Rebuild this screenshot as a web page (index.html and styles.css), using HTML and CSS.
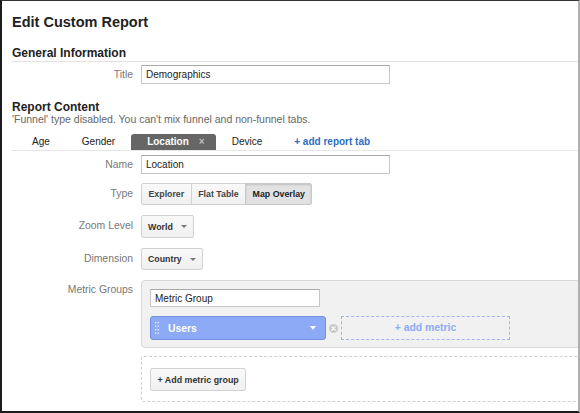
FILE: index.html
```html
<!DOCTYPE html>
<html>
<head>
<meta charset="utf-8">
<title>Edit Custom Report</title>
<link rel="stylesheet" href="styles.css">
</head>
<body>
<div class="frame">
  <h1 class="page-title">Edit Custom Report</h1>

  <h2 class="section general">General Information</h2>
  <div class="row row-title">
    <label class="lbl lh19">Title</label>
    <input class="txt wide" type="text" value="Demographics">
  </div>

  <h2 class="section content">Report Content</h2>
  <p class="note">'Funnel' type disabled. You can't mix funnel and non-funnel tabs.</p>

  <div class="tabs">
    <span class="tab">Age</span>
    <span class="tab">Gender</span>
    <span class="tab active">Location<span class="x">×</span></span>
    <span class="tab">Device</span>
    <a class="tab add">+ add report tab</a>
  </div>

  <div class="row row-name">
    <label class="lbl lh19">Name</label>
    <input class="txt wide" type="text" value="Location">
  </div>

  <div class="row row-type">
    <label class="lbl lh22">Type</label>
    <div class="seg">
      <button class="btn">Explorer</button>
      <button class="btn">Flat Table</button>
      <button class="btn on">Map Overlay</button>
    </div>
  </div>

  <div class="row row-zoom">
    <label class="lbl lh22">Zoom Level</label>
    <button class="sel h23">World<span class="caret"></span></button>
  </div>

  <div class="row row-dim">
    <label class="lbl lh22">Dimension</label>
    <button class="sel h22">Country<span class="caret"></span></button>
  </div>

  <div class="row row-metric">
    <label class="lbl lh20">Metric Groups</label>
    <div class="panel">
      <input class="txt group-name" type="text" value="Metric Group">
      <div class="metric-row">
        <div class="chip">
          <svg class="grip" width="4" height="12" viewBox="0 0 4 12">
            <g fill="#eef3ff">
              <rect x="0" y="0" width="1.3" height="1.3"/><rect x="2.6" y="0" width="1.3" height="1.3"/>
              <rect x="0" y="3.5" width="1.3" height="1.3"/><rect x="2.6" y="3.5" width="1.3" height="1.3"/>
              <rect x="0" y="7" width="1.3" height="1.3"/><rect x="2.6" y="7" width="1.3" height="1.3"/>
              <rect x="0" y="10.5" width="1.3" height="1.3"/><rect x="2.6" y="10.5" width="1.3" height="1.3"/>
            </g>
          </svg>
          <span class="chip-text">Users</span>
          <span class="chip-caret"></span>
        </div>
        <svg class="remove" width="9" height="9" viewBox="0 0 9 9">
          <circle cx="4.5" cy="4.5" r="4.5" fill="#c9c9c9"/>
          <path d="M2.8 2.8 L6.2 6.2 M6.2 2.8 L2.8 6.2" stroke="#fff" stroke-width="1.2" stroke-linecap="round"/>
        </svg>
        <div class="add-metric">+ add metric</div>
      </div>
    </div>
  </div>

  <div class="add-group">
    <button class="btn plain">+ Add metric group</button>
  </div>
</div>
</body>
</html>
```

FILE: styles.css
```css
html, body {
  margin: 0;
  padding: 0;
  background: #fff;
}

.frame {
  width: 580px;
  height: 413px;
  box-sizing: border-box;
  border-top: 1px solid #333;
  border-left: 2px solid #1c1c1c;
  border-bottom: 2px solid #1c1c1c;
  border-right: 2px solid #b0b0b0;
  padding: 12px 0 0 10px;
  overflow: hidden;
  font-family: "Liberation Sans", Arial, sans-serif;
  color: #222;
  background: #fff;
}

.page-title {
  margin: 0;
  font-size: 14.5px;
  line-height: 18px;
  font-weight: bold;
  color: #222;
}

.section {
  margin: 0;
  font-size: 12px;
  font-weight: bold;
  color: #222;
}

.section.general {
  margin-top: 15px;
  line-height: 15px;
  border-bottom: 1px solid #e3e3e3;
}

.section.content {
  margin-top: 16px;
  line-height: 14px;
}

.note {
  margin: -1px 0 0;
  font-size: 10.5px;
  line-height: 12px;
  color: #666;
}

.tabs {
  display: flex;
  margin-top: 9px;
  padding-left: 4px;
  border-bottom: 1px solid #e6e6e6;
  height: 16px;
}

.tab {
  padding: 0 16px;
  font-size: 10px;
  line-height: 16px;
  color: #222;
  white-space: nowrap;
}

.tab.active {
  background: #666;
  color: #fff;
  font-weight: bold;
  border-radius: 3px 3px 0 0;
  padding: 0 11px 0 16px;
}

.tab .x {
  margin-left: 10px;
  color: #bdbdbd;
  font-weight: bold;
}

.tab.add {
  color: #2d6ec4;
  font-weight: bold;
}

.row {
  display: flex;
  align-items: flex-start;
}

.row-title { margin-top: 3px; }
.row-name { margin-top: 4px; }
.row-type { margin-top: 9px; }
.row-zoom { margin-top: 10px; }
.row-dim { margin-top: 10px; }
.row-metric { margin-top: 10px; }

.lbl {
  flex: none;
  width: 121px;
  margin-right: 8px;
  text-align: right;
  font-size: 10.4px;
  color: #777;
}

.lh19 { line-height: 19px; }
.lh20 { line-height: 20px; }
.lh22 { line-height: 22px; }

.txt {
  box-sizing: border-box;
  height: 19px;
  margin: 0;
  padding: 0 4px;
  border: 1px solid #c6c6c6;
  border-top-color: #a9a9a9;
  border-radius: 0;
  font-family: "Liberation Sans", Arial, sans-serif;
  font-size: 10px;
  color: #222;
  background: #fff;
  outline: none;
}

.txt.wide { width: 249px; }

.seg {
  display: flex;
}

.btn {
  box-sizing: border-box;
  height: 22px;
  margin: 0;
  padding: 0 6.5px;
  border: 1px solid #d2d2d2;
  background: linear-gradient(#f9f9f9, #f0f0f0);
  font-family: "Liberation Sans", Arial, sans-serif;
  font-size: 8.8px;
  font-weight: bold;
  color: #444;
  white-space: nowrap;
}

.seg .btn + .btn { margin-left: -1px; }
.seg .btn:first-child { border-radius: 2px 0 0 2px; }
.seg .btn:last-child { border-radius: 0 2px 2px 0; }

.btn.on {
  background: #e2e2e2;
  border-color: #c8c8c8;
  box-shadow: inset 0 1px 2px rgba(0, 0, 0, 0.15);
  color: #222;
}

.sel {
  display: inline-flex;
  align-items: center;
  box-sizing: border-box;
  margin: 0;
  padding: 0 6px 0 6px;
  border: 1px solid #d2d2d2;
  border-radius: 2px;
  background: linear-gradient(#f9f9f9, #f0f0f0);
  font-family: "Liberation Sans", Arial, sans-serif;
  font-size: 8.8px;
  font-weight: bold;
  color: #333;
}

.sel.h23 { height: 23px; }
.sel.h22 { height: 22px; }

.caret {
  display: inline-block;
  margin-left: 8px;
  width: 0;
  height: 0;
  border-left: 3px solid transparent;
  border-right: 3px solid transparent;
  border-top: 3px solid #777;
}

.panel {
  flex: none;
  box-sizing: border-box;
  width: 470px;
  height: 68px;
  padding: 8px 0 0 8px;
  background: #f1f1f1;
  border: 1px solid #d8d8d8;
  border-radius: 4px;
}

.txt.group-name {
  display: block;
  width: 170px;
  height: 18px;
}

.metric-row {
  display: flex;
  align-items: center;
  margin-top: 9px;
}

.chip {
  box-sizing: border-box;
  display: flex;
  align-items: center;
  width: 176px;
  height: 24px;
  padding-left: 4px;
  background: #8caaf5;
  border: 1px solid #6f8fe2;
  border-radius: 3px;
}

.grip { flex: none; }

.chip-text {
  margin-left: 9px;
  font-size: 10.4px;
  font-weight: bold;
  color: #fff;
}

.chip-caret {
  margin-left: auto;
  margin-right: 9px;
  width: 0;
  height: 0;
  border-left: 3.5px solid transparent;
  border-right: 3.5px solid transparent;
  border-top: 4px solid #fff;
}

.remove {
  flex: none;
  margin-left: 3px;
}

.add-metric {
  box-sizing: border-box;
  width: 169px;
  height: 24px;
  margin-left: 3px;
  border: 1px dashed #9cb6ef;
  font-size: 10.4px;
  font-weight: bold;
  line-height: 22px;
  text-align: center;
  color: #8eacf6;
}

.add-group {
  box-sizing: border-box;
  width: 470px;
  height: 46px;
  margin: 8px 0 0 129px;
  padding: 11px 0 0 8px;
  border: 1px dashed #cfcfcf;
  border-radius: 3px;
}

.btn.plain {
  height: 23px;
  font-size: 8.9px;
  border-radius: 2px;
  color: #333;
}
```
